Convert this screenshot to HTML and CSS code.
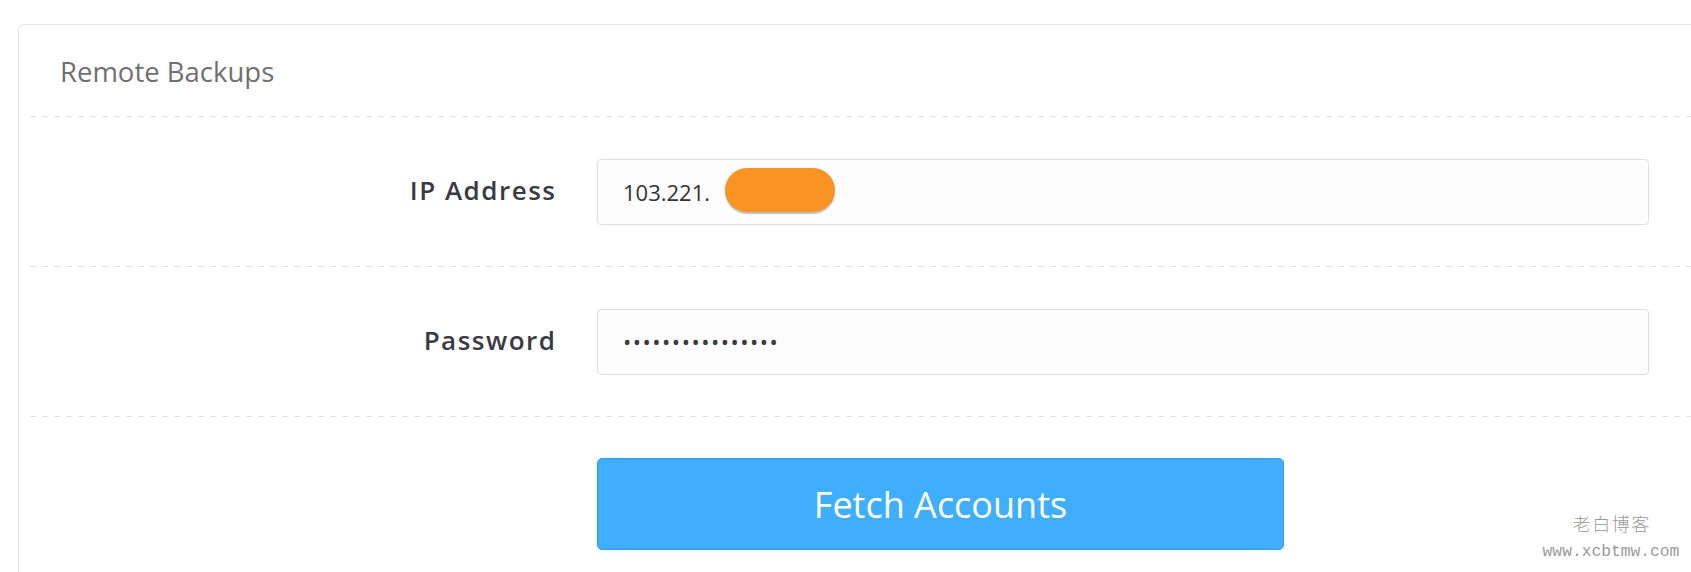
FILE: index.html
```html
<!DOCTYPE html>
<html>
<head>
<meta charset="utf-8">
<link rel="stylesheet" href="styles.css">
</head>
<body>
<div class="card">
  <div class="card-head">Remote Backups</div>
  <div class="row">
    <label class="label">IP Address</label>
    <div class="field-wrap">
      <div class="field"><span class="value">103.221.</span></div>
      <span class="redact"></span>
    </div>
  </div>
  <div class="row">
    <label class="label">Password</label>
    <div class="field-wrap">
      <div class="field"><span class="value dots">••••••••••••••••</span></div>
    </div>
  </div>
  <div class="row last">
    <div class="label"></div>
    <button class="btn">Fetch Accounts</button>
  </div>
</div>
<div class="watermark">
  <div class="wm-cn">老白博客</div>
  <div class="wm-url">www.xcbtmw.com</div>
</div>
</body>
</html>
```
FILE: styles.css
```css
html, body {
  margin: 0;
  padding: 0;
  background: #ffffff;
  overflow: hidden;
  height: 572px;
}
body {
  font-family: "Open Sans", "Liberation Sans", sans-serif;
  position: relative;
}
.card {
  margin: 24px 0 0 18px;
  width: 1740px;
  height: 570px;
  border: 1px solid #e3e4ec;
  border-radius: 6px;
  padding-left: 11px;
  box-sizing: border-box;
  background: #fff;
}
.card-head {
  height: 92px;
  display: flex;
  align-items: center;
  padding-left: 30px;
  font-size: 27.5px;
  color: #707070;
  background-image: repeating-linear-gradient(to right, #dfdfe5 0 6px, transparent 6px 12px);
  background-size: 100% 1px;
  background-repeat: no-repeat;
  background-position: bottom left;
}
.row {
  display: grid;
  grid-template-columns: 525px 1052px;
  column-gap: 42px;
  align-items: center;
  height: 150px;
  box-sizing: border-box;
  padding-bottom: 1px;
  background-image: repeating-linear-gradient(to right, #dfdfe5 0 6px, transparent 6px 12px);
  background-size: 100% 1px;
  background-repeat: no-repeat;
  background-position: bottom left;
}
.row.last {
  align-items: start;
  padding-top: 41px;
  background-image: none;
}
.label {
  text-align: right;
  font-size: 26px;
  font-weight: 600;
  color: #3a3a42;
  letter-spacing: 1.5px;
  margin-right: -1.5px;
  padding-bottom: 4px;
}
.field-wrap {
  position: relative;
}
.field {
  height: 66px;
  box-sizing: border-box;
  border: 1px solid #dcdde6;
  border-radius: 4px;
  background: #fdfdfe;
  display: flex;
  align-items: center;
  padding-left: 25px;
  font-size: 22px;
  color: #333;
}
.dots {
  font-size: 22px;
  letter-spacing: 1.5px;
  color: #3a3a3a;
  padding-bottom: 2px;
}
.redact {
  position: absolute;
  left: 128px;
  top: 9px;
  width: 110px;
  height: 44px;
  border-radius: 22px;
  background: #f99324;
  box-shadow: 0 2px 1px rgba(0,0,0,0.25);
}
.btn {
  width: 687px;
  height: 92px;
  border: 1px solid #2a9ff5;
  border-radius: 5px;
  background: #3eaefd;
  color: #fff;
  font-family: "Open Sans", "Liberation Sans", sans-serif;
  font-size: 36px;
  padding: 0;
}
.watermark {
  position: absolute;
  left: 1541px;
  top: 510px;
  width: 140px;
  text-align: center;
  color: #9a9a9a;
}
.wm-cn {
  font-family: "Noto Sans CJK SC", sans-serif;
  font-size: 18px;
  letter-spacing: 1.7px;
  padding-left: 1.7px;
  line-height: 26px;
  font-weight: 300;
}
.wm-url {
  font-family: "Liberation Mono", monospace;
  font-size: 16.3px;
  line-height: 22px;
  margin-top: 5px;
}
```
